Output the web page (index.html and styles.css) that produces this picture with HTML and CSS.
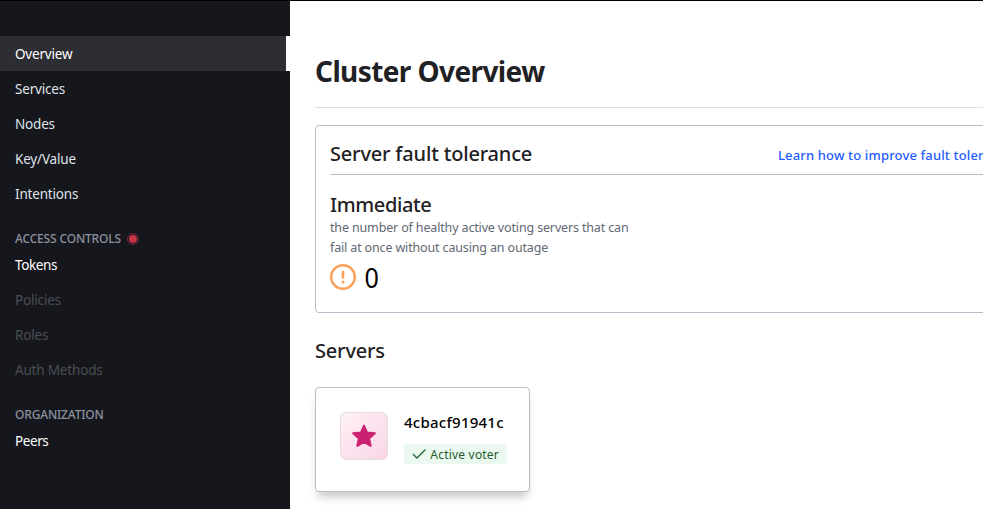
FILE: index.html
```
<!DOCTYPE html>
<html lang="en">
<head>
<meta charset="utf-8">
<title>Consul</title>
<link rel="stylesheet" href="styles.css">
</head>
<body>
<div class="app">
  <nav class="sidebar">
    <ul class="nav">
      <li class="item active">Overview</li>
      <li class="item">Services</li>
      <li class="item">Nodes</li>
      <li class="item">Key/Value</li>
      <li class="item">Intentions</li>
    </ul>
    <h2 class="group">ACCESS CONTROLS<i class="dot"></i></h2>
    <ul class="nav">
      <li class="item bright">Tokens</li>
      <li class="item disabled">Policies</li>
      <li class="item disabled">Roles</li>
      <li class="item disabled">Auth Methods</li>
    </ul>
    <h2 class="group">ORGANIZATION</h2>
    <ul class="nav">
      <li class="item bright">Peers</li>
    </ul>
  </nav>
  <main class="main">
    <h1 class="title">Cluster Overview</h1>
    <section class="panel">
      <header class="panel-head">
        <h2 class="heading">Server fault tolerance</h2>
        <a class="learn">Learn how to improve fault tolerance</a>
      </header>
      <h3 class="subheading">Immediate</h3>
      <p class="desc">the number of healthy active voting servers that can<br>fail at once without causing an outage</p>
      <div class="count">
        <svg width="26" height="26" viewBox="0 0 26 26" fill="none" stroke="#f9a15a" stroke-width="2.4" stroke-linecap="round"><circle cx="13" cy="13" r="11.800"/><path d="M13 8v5.400" stroke-width="2.600"/><path d="M13 17.900v.2" stroke-width="3"/></svg>
        <span class="number">0</span>
      </div>
    </section>
    <h2 class="servers">Servers</h2>
    <article class="card">
      <div class="tile"><svg width="24" height="24" viewBox="0 0 24 24"><path d="M12 1.700l3 6.800 7.900.8-5.900 5.100 1.700 7.400-6.700-3.800-6.700 3.800L7 14.400 1.100 9.300 9 8.500z" fill="#ca2171" stroke="#ca2171" stroke-width="2" stroke-linejoin="round"/></svg></div>
      <div class="info">
        <div class="name">4cbacf91941c</div>
        <div class="badge"><svg width="16" height="16" viewBox="0 0 16 16" fill="none" stroke="#226633" stroke-width="1.500" stroke-linecap="round" stroke-linejoin="round"><path d="M1.500 8.500l4 4L14.500 3.500"/></svg><span>Active voter</span></div>
      </div>
    </article>
  </main>
</div>
</body>
</html>
```
FILE: styles.css
```
* { box-sizing: border-box; margin: 0; padding: 0; }
body { font-family: "Noto Sans", "Open Sans", sans-serif; background: #fff; overflow: hidden; }
.app { display: flex; height: 509px; border-top: 1px solid #000; overflow: hidden; }
.sidebar { flex: 0 0 290px; background: #16171c; padding-top: 35px; }
.nav { list-style: none; }
.item { height: 35px; line-height: 37px; padding-left: 15px; font-size: 13.500px; letter-spacing: -.18px; color: #dfe3e8; }
.item.active { background: #2d2e33; border-right: 4px solid #fff; color: #fff; }
.item.bright { color: #fff; letter-spacing: -.4px; }
.item.disabled { color: #4a4d55; }
.group { display: flex; align-items: center; gap: 6px; height: 36px; padding: 19px 0 0 15px; font-size: 12px; font-weight: 500; line-height: 17px; letter-spacing: -.17px; color: #8b919f; }
.dot { width: 12px; height: 12px; border: 1px solid #73283a; border-radius: 50%; background: #c73445; background-clip: content-box; padding: 1px; }
.main { flex: none; width: 761px; padding: 0 25px; }
.title { height: 107px; padding-top: 50px; font-size: 28px; line-height: 40px; font-weight: 700; letter-spacing: -.6px; color: #1f2124; border-bottom: 1px solid #dedfe3; }
.panel { width: 711px; height: 188px; margin-top: 17px; padding: 14px; border: 1px solid #b9bdcb; border-radius: 4px; }
.panel-head { display: flex; justify-content: space-between; height: 35px; border-bottom: 1px solid #b9bdcb; }
.heading, .subheading, .servers { font-size: 20px; font-weight: 500; line-height: 28px; letter-spacing: -.18px; color: #1f2124; }
.learn { width: 233px; font-size: 13px; font-weight: 500; line-height: 31px; letter-spacing: .15px; white-space: nowrap; color: #1f5cff; }
.subheading { margin-top: 16px; letter-spacing: -.38px; }
.desc { margin-top: -1px; font-size: 12.500px; line-height: 20px; letter-spacing: -.15px; color: #626873; }
.count { display: flex; align-items: center; gap: 8px; height: 36px; margin-top: 1px; font-size: 27px; line-height: 36px; color: #000; }
.number { padding-top: 1px; transform: scaleX(.93); }
.servers { margin-top: 24px; }
.card { display: flex; gap: 16px; width: 215px; height: 105px; margin-top: 22px; padding: 24px; border: 1px solid #b9bdcb; border-radius: 4px; box-shadow: 0 8px 10px -3px rgba(0,0,0,.22); background: #fff; }
.tile { display: flex; align-items: center; justify-content: center; flex: none; width: 48px; height: 48px; border: 1px solid #e5dce2; border-radius: 6px; background: linear-gradient(135deg, #fff0f6, #f8d5e6); }
.info { white-space: nowrap; }
.name { font-size: 15px; font-weight: 500; line-height: 20px; letter-spacing: .25px; color: #000; }
.badge { display: flex; align-items: center; gap: 4px; width: 103px; height: 20px; margin-top: 12px; padding: 0 8px; font-size: 12px; letter-spacing: .2px; border-radius: 2px; background: #ebf8ef; color: #245b2d; }
```
